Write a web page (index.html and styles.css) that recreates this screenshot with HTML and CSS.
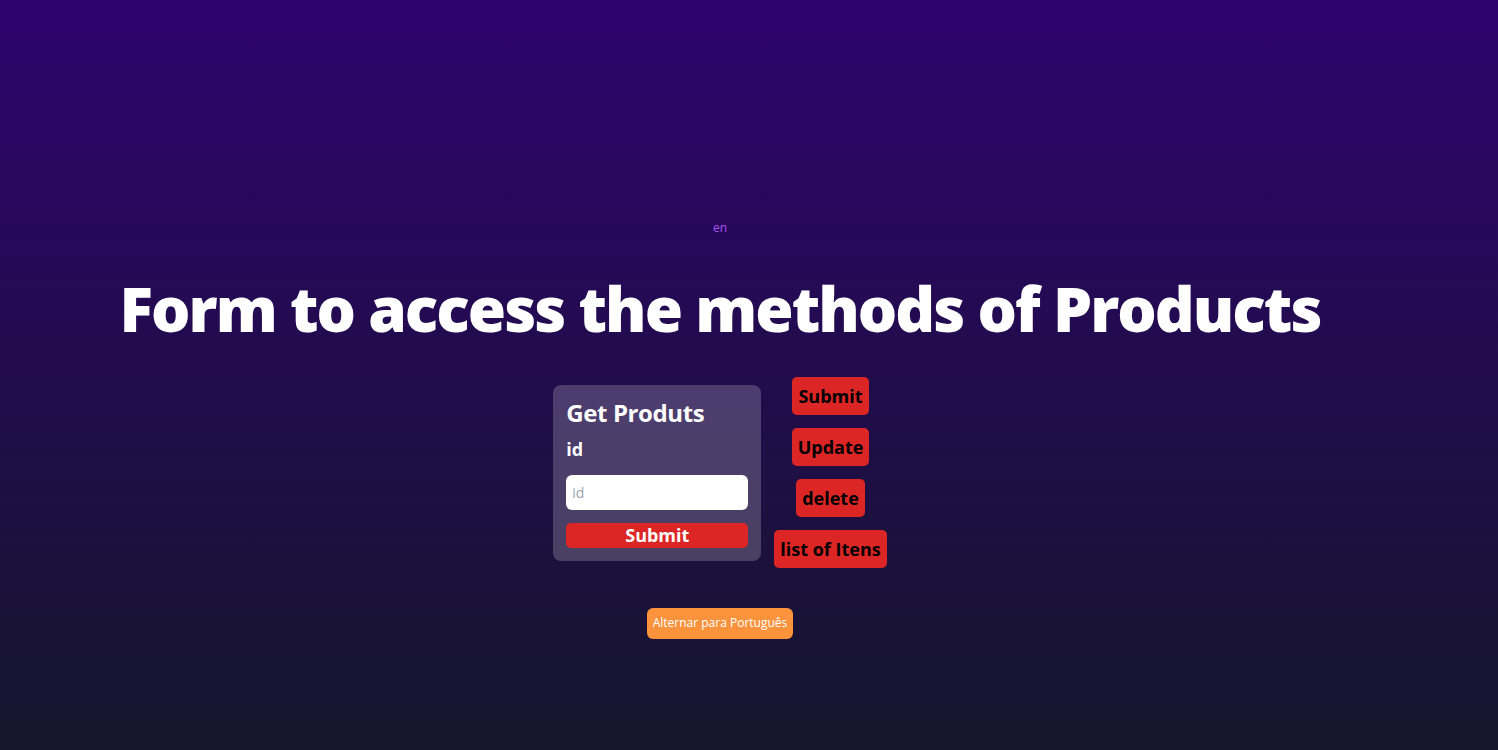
FILE: index.html
```html
<!DOCTYPE html>
<html lang="en">
<head>
<meta charset="utf-8">
<title>Products</title>
<link rel="stylesheet" href="styles.css">
</head>
<body>
<main class="page">
  <div class="wrap">
    <p class="lang">en</p>
    <h1 class="title">Form to access the methods of Products</h1>
    <div class="row">
      <form class="card">
        <h2 class="card-title">Get Produts</h2>
        <label class="label" for="id">id</label>
        <input class="input" id="id" type="text" placeholder="id">
        <button class="submit" type="button">Submit</button>
      </form>
      <div class="actions">
        <button class="action" type="button">Submit</button>
        <button class="action" type="button">Update</button>
        <button class="action" type="button">delete</button>
        <button class="action" type="button">list of Itens</button>
      </div>
    </div>
    <button class="switch" type="button">Alternar para Português</button>
  </div>
</main>
</body>
</html>
```

FILE: styles.css
```css
* { box-sizing: border-box; }
html, body { margin: 0; padding: 0; }
body {
  font-family: "Open Sans", "Noto Sans", sans-serif;
}
.page {
  min-height: 750px;
  background: linear-gradient(to bottom, #2e026d, #15162c);
}
.wrap {
  width: 1440px;
  display: flex;
  flex-direction: column;
  align-items: center;
  padding-top: 220px;
}
.lang {
  margin: 0;
  font-size: 12px;
  line-height: 16px;
  color: #a855f7;
}
.title {
  margin: 40px 0 0;
  font-size: 62px;
  line-height: 64px;
  font-weight: 800;
  letter-spacing: -1.95px;
  color: #fff;
}
.row {
  margin-top: 37px;
  display: flex;
  align-items: center;
  gap: 13px;
}
.card {
  width: 208px;
  padding: 12px 13px 13px;
  background: rgba(255, 255, 255, 0.2);
  border-radius: 8px;
  display: flex;
  flex-direction: column;
}
.card-title {
  margin: 0;
  font-size: 24px;
  line-height: 32px;
  font-weight: 700;
  color: #fff;
  letter-spacing: -0.4px;
}
.label {
  margin-top: 6px;
  font-size: 18px;
  line-height: 28px;
  font-weight: 700;
  color: #fff;
}
.input {
  margin-top: 12px;
  height: 35px;
  width: 100%;
  border: none;
  border-radius: 6px;
  padding: 0 6px;
  font-family: inherit;
  font-size: 14px;
  background: #fff;
  outline: none;
}
.input::placeholder { color: #9ca3af; }
.submit {
  margin-top: 13px;
  height: 25px;
  border: none;
  border-radius: 5px;
  background: #dc2626;
  color: #fff;
  font-family: inherit;
  font-size: 18px;
  line-height: 25px;
  font-weight: 700;
  padding: 0;
}
.actions {
  display: flex;
  flex-direction: column;
  align-items: center;
  gap: 13px;
}
.action {
  border: none;
  border-radius: 5px;
  background: #dc2626;
  color: #000;
  font-family: inherit;
  font-size: 18px;
  line-height: 28px;
  font-weight: 700;
  padding: 5px 6px;
}
.switch {
  margin-top: 40px;
  border: none;
  border-radius: 6px;
  background: #fb923c;
  color: #fff;
  font-family: inherit;
  font-size: 12px;
  line-height: 16px;
  padding: 7px 6px 8px;
}
```
